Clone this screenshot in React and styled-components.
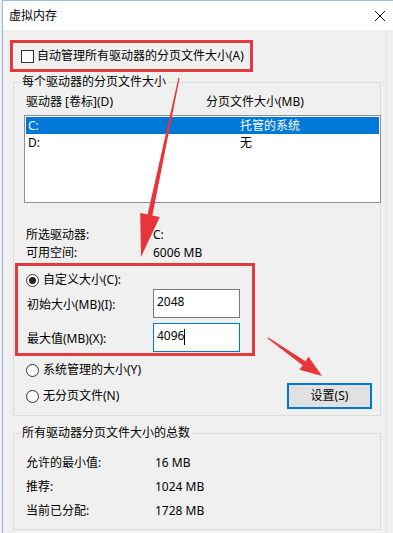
import React from "react";
import styled, { createGlobalStyle } from "styled-components";

const GlobalStyle = createGlobalStyle`
  html, body {
    margin: 0;
    padding: 0;
    background: #f0f0f0;
  }
  body {
    font-family: "Noto Sans", "Noto Sans CJK SC", sans-serif;
    font-size: 12px;
    color: #000;
  }
`;

const RED = "#e23b3e";
const BLUE = "#0078d7";

const Window = styled.div`
  position: relative;
  width: 391px;
  height: 533px;
  margin-left: 2px;
  border-left: 1px solid #8fb6dd;
  overflow: hidden;
  background: #f0f0f0;
`;

const TitleBar = styled.div`
  height: 30px;
  box-sizing: border-box;
  border-top: 1px solid #9cc0e2;
  background: #fff;
  display: flex;
  align-items: center;
  justify-content: space-between;
  padding: 0 8px 0 6px;
`;

const Title = styled.span`
  line-height: 16px;
`;

const CloseIcon = () => (
  <svg width="12" height="12" viewBox="0 0 12 12">
    <path d="M1 1 L11 11 M11 1 L1 11" stroke="#111" strokeWidth="1" fill="none" />
  </svg>
);

const Body = styled.div`
  padding: 10px 0 0 7px;
  box-sizing: border-box;
  width: 384px;
  height: 503px;
  border-right: 1px solid #e4e4e4;
`;

const HighlightBox = styled.div`
  box-sizing: border-box;
  border: 3px solid ${RED};
  width: ${(p) => p.$w}px;
  height: ${(p) => p.$h}px;
  margin-left: ${(p) => p.$ml || 0}px;
  margin-top: ${(p) => p.$mt || 0}px;
`;

const AutoRow = styled.div`
  display: flex;
  align-items: center;
  height: 100%;
  padding-left: 8px;
  gap: 3px;
  line-height: 16px;
`;

const Checkbox = styled.span`
  display: inline-block;
  width: 13px;
  height: 13px;
  box-sizing: border-box;
  border: 1px solid #333;
  background: #fff;
`;

const Group = styled.fieldset`
  margin: ${(p) => p.$mt}px 0 0 3px;
  padding: 0 0 ${(p) => p.$pb}px 0;
  width: 368px;
  box-sizing: border-box;
  border: 1px solid #dcdcdc;
  min-width: 0;
`;

const Legend = styled.legend`
  margin-left: 6px;
  padding: 0 2px;
  line-height: 16px;
`;

const HeaderRow = styled.div`
  display: grid;
  grid-template-columns: 180px 1fr;
  margin-top: 4px;
  padding-left: 12px;
  line-height: 16px;
`;

const ListBox = styled.div`
  margin: 5px 0 0 10px;
  width: 357px;
  height: 88px;
  box-sizing: border-box;
  border: 1px solid #8b8f96;
  background: #fff;
  padding: 1px;
`;

const ListRow = styled.div`
  display: grid;
  grid-template-columns: 212px 1fr;
  height: 17px;
  line-height: 17px;
  padding-left: 2px;
  background: ${(p) => (p.$selected ? BLUE : "transparent")};
  color: ${(p) => (p.$selected ? "#fff" : "#000")};
`;

const InfoList = styled.div`
  margin-top: ${(p) => p.$mt}px;
  padding-left: 12px;
`;

const InfoRow = styled.div`
  display: grid;
  grid-template-columns: ${(p) => p.$col}px 1fr;
  line-height: ${(p) => p.$lh}px;
`;

const Radio = styled.span`
  display: inline-block;
  width: 13px;
  height: 13px;
  box-sizing: border-box;
  border: 1px solid #333;
  border-radius: 50%;
  background: #fff;
  position: relative;
  flex: none;

  &::after {
    content: "";
    display: ${(p) => (p.$checked ? "block" : "none")};
    position: absolute;
    left: 2px;
    top: 2px;
    width: 7px;
    height: 7px;
    border-radius: 50%;
    background: #222;
  }
`;

const RadioRow = styled.div`
  display: flex;
  align-items: center;
  gap: 4px;
  line-height: 16px;
  padding-left: ${(p) => p.$pl}px;
  margin-top: ${(p) => p.$mt || 0}px;
`;

const FieldRow = styled.div`
  display: grid;
  grid-template-columns: 126px 87px;
  align-items: center;
  padding-left: 9px;
  margin-top: ${(p) => p.$mt}px;
`;

const Input = styled.div`
  height: 29px;
  box-sizing: border-box;
  border: 1px solid ${(p) => (p.$focused ? BLUE : "#7a7a7a")};
  background: #fff;
  padding: 3px 0 0 3px;
  line-height: 18px;
  display: flex;
  align-items: flex-start;
`;

const Caret = styled.span`
  display: inline-block;
  width: 1px;
  height: 16px;
  margin-top: 2px;
  background: #000;
`;

const BottomRow = styled.div`
  display: flex;
  align-items: center;
  justify-content: space-between;
  margin-top: 5px;
  padding: 0 8px 0 12px;
`;

const Button = styled.div`
  width: 85px;
  height: 26px;
  box-sizing: border-box;
  border: 2px solid ${BLUE};
  background: #e1e1e1;
  display: flex;
  align-items: center;
  justify-content: center;
  line-height: 16px;
`;

const Overlay = styled.svg`
  position: absolute;
  left: 0;
  top: 0;
  pointer-events: none;
`;

// arrow coordinates are page coordinates; the window starts at x = 3
const Arrows = () => (
  <Overlay width="391" height="533" viewBox="3 0 391 533">
    <polygon
      fill="#e8353a"
      points="178.4,78 179.6,78 152.4,215.5 159.8,217.1 141,257 140.2,212.9 147.6,214.5"
    />
    <polygon
      fill="#e8353a"
      points="268.4,337.4 305.4,361.3 308.6,356.8 322,376 299.4,369.8 302.6,365.3 267.6,338.6"
    />
  </Overlay>
);

export default function App() {
  return (
    <>
      <GlobalStyle />
      <Window>
        <TitleBar>
          <Title>虚拟内存</Title>
          <CloseIcon />
        </TitleBar>
        <Body>
          <HighlightBox $w={243} $h={32}>
            <AutoRow>
              <Checkbox />
              <span>自动管理所有驱动器的分页文件大小(A)</span>
            </AutoRow>
          </HighlightBox>

          <Group $mt={2} $pb={6}>
            <Legend>每个驱动器的分页文件大小</Legend>
            <HeaderRow>
              <span>驱动器 [卷标](D)</span>
              <span>分页文件大小(MB)</span>
            </HeaderRow>
            <ListBox>
              <ListRow $selected>
                <span>C:</span>
                <span>托管的系统</span>
              </ListRow>
              <ListRow>
                <span>D:</span>
                <span>无</span>
              </ListRow>
            </ListBox>
            <InfoList $mt={23}>
              <InfoRow $col={127} $lh={18}>
                <span>所选驱动器:</span>
                <span>C:</span>
              </InfoRow>
              <InfoRow $col={127} $lh={18}>
                <span>可用空间:</span>
                <span>6006 MB</span>
              </InfoRow>
            </InfoList>
            <HighlightBox $w={240} $h={93} $ml={1} $mt={1}>
              <RadioRow $pl={8} $mt={6}>
                <Radio $checked />
                <span>自定义大小(C):</span>
              </RadioRow>
              <FieldRow $mt={1}>
                <span>初始大小(MB)(I):</span>
                <Input>2048</Input>
              </FieldRow>
              <FieldRow $mt={5}>
                <span>最大值(MB)(X):</span>
                <Input $focused>
                  4096
                  <Caret />
                </Input>
              </FieldRow>
            </HighlightBox>
            <RadioRow $pl={12} $mt={6}>
              <Radio />
              <span>系统管理的大小(Y)</span>
            </RadioRow>
            <BottomRow>
              <RadioRow $pl={0}>
                <Radio />
                <span>无分页文件(N)</span>
              </RadioRow>
              <Button>设置(S)</Button>
            </BottomRow>
          </Group>

          <Group $mt={9} $pb={6}>
            <Legend>所有驱动器分页文件大小的总数</Legend>
            <InfoList $mt={10}>
              <InfoRow $col={129} $lh={24}>
                <span>允许的最小值:</span>
                <span>16 MB</span>
              </InfoRow>
              <InfoRow $col={129} $lh={24}>
                <span>推荐:</span>
                <span>1024 MB</span>
              </InfoRow>
              <InfoRow $col={129} $lh={24}>
                <span>当前已分配:</span>
                <span>1728 MB</span>
              </InfoRow>
            </InfoList>
          </Group>
        </Body>
        <Arrows />
      </Window>
    </>
  );
}
